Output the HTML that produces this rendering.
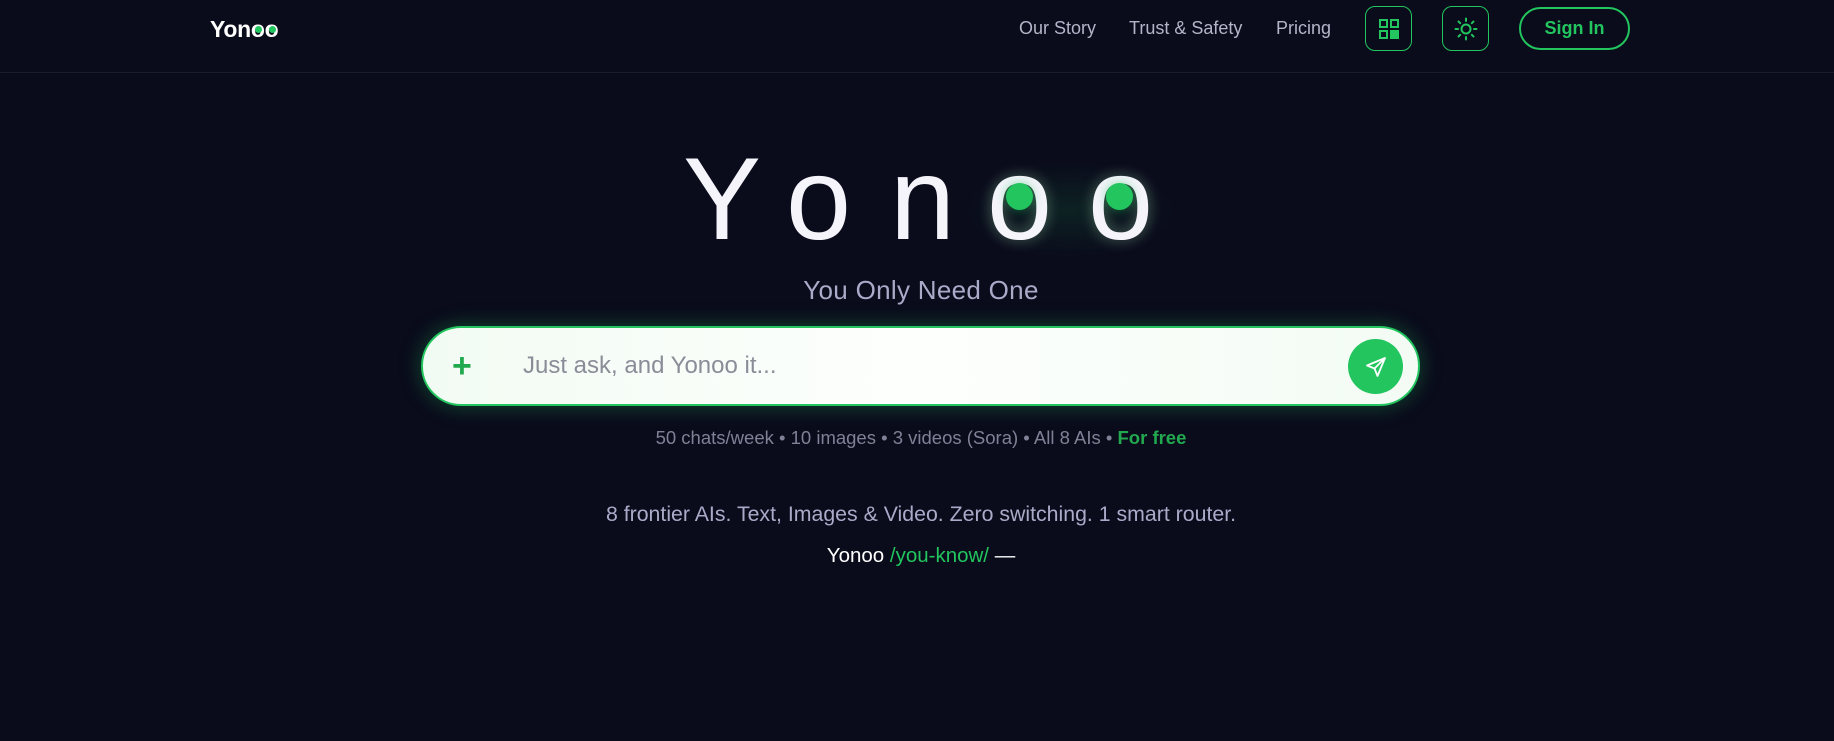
<!DOCTYPE html>
<html><head><meta charset="utf-8"><style>
*{margin:0;padding:0;box-sizing:border-box}
body{width:1834px;height:741px;background:#0a0b1b;font-family:"Liberation Sans",sans-serif;position:relative;overflow:hidden;color:#fff}
.hdr{position:absolute;left:0;top:0;width:1834px;height:73px;border-bottom:1px solid #1a1c2c}
.abs{position:absolute;white-space:nowrap}
.nav{font-size:18px;color:#b3b5c8;top:18px}
.ib{position:absolute;top:6px;width:47px;height:45px;border:1.5px solid #22c55e;border-radius:10px;display:flex;align-items:center;justify-content:center}
.big{position:absolute;top:129px;font-size:117px;color:#f4f4fa;line-height:140px}
.dot{position:absolute;width:27px;height:27px;border-radius:50%;background:#22c55e}
</style></head><body>
<div class="hdr"></div>
<div class="abs" style="left:210px;top:16px;font-size:23px;font-weight:bold;letter-spacing:-0.3px">Yon<span style="position:relative">o<span style="position:absolute;left:4px;top:10px;width:7px;height:7px;border-radius:50%;background:#22c55e"></span></span><span style="position:relative">o<span style="position:absolute;left:4px;top:10px;width:7px;height:7px;border-radius:50%;background:#22c55e"></span></span></div>
<div class="abs nav" style="left:1019px">Our Story</div>
<div class="abs nav" style="left:1129px">Trust &amp; Safety</div>
<div class="abs nav" style="left:1276px">Pricing</div>
<div class="ib" style="left:1365px"><svg width="22" height="22" viewBox="0 0 22 22" fill="none" stroke="#22c55e" stroke-width="2"><rect x="2" y="2" width="7" height="7"/><rect x="13" y="2" width="7" height="7"/><rect x="2" y="13" width="7" height="7"/><rect x="13" y="13" width="7" height="7" fill="#22c55e"/></svg></div>
<div class="ib" style="left:1442px"><svg width="24" height="24" viewBox="0 0 24 24" fill="none" stroke="#22c55e" stroke-width="2" stroke-linecap="round"><circle cx="12" cy="12" r="4.5"/><path d="M12 1.5v2.5M12 20v2.5M1.5 12H4M20 12h2.5M4.5 4.5l1.7 1.7M17.8 17.8l1.7 1.7M4.5 19.5l1.7-1.7M17.8 6.2l1.7-1.7"/></svg></div>
<div class="abs" style="left:1519px;top:7px;width:111px;height:43px;border:2px solid #22c55e;border-radius:22px;color:#22c55e;font-size:18px;font-weight:bold;text-align:center;line-height:39px">Sign In</div>

<div style="position:absolute;left:960px;top:160px;width:220px;height:100px;border-radius:50px;background:radial-gradient(ellipse at center,rgba(34,197,94,0.12),rgba(34,197,94,0) 70%)"></div>
<div class="big" style="left:683px">Y</div>
<div class="big" style="left:786px">o</div>
<div class="big" style="left:890px">n</div>
<div class="big" style="left:987px;text-shadow:0 0 14px rgba(200,255,210,.35)">o</div>
<div class="big" style="left:1088px;text-shadow:0 0 14px rgba(200,255,210,.35)">o</div>
<div class="dot" style="left:1006px;top:183px;box-shadow:0 0 10px rgba(34,197,94,.5)"></div>
<div class="dot" style="left:1106px;top:183px;box-shadow:0 0 10px rgba(34,197,94,.5)"></div>

<div class="abs" style="left:0;width:1842px;text-align:center;top:275px;font-size:26px;color:#a9abc9;letter-spacing:0.3px">You Only Need One</div>

<div style="position:absolute;left:421px;top:326px;width:999px;height:80px;border:2.5px solid #22c55e;border-radius:40px;background:linear-gradient(90deg,#f2fbf3,#fdfffd 50%,#f3fbf4);box-shadow:0 0 22px rgba(34,197,94,.35)"></div>
<div class="abs" style="left:452px;top:349px;font-size:34px;color:#22a94f;line-height:34px;font-weight:bold">+</div>
<div class="abs" style="left:523px;top:352px;font-size:24px;color:#8a8d98">Just ask, and Yonoo it...</div>
<div style="position:absolute;left:1348px;top:339px;width:55px;height:55px;border-radius:50%;background:#22c55e;display:flex;align-items:center;justify-content:center"><svg width="24" height="24" viewBox="0 0 24 24" fill="none" stroke="#fff" stroke-width="1.8" stroke-linejoin="round"><path d="M21 3L3 10.5l7.5 3L13.5 21z"/><path d="M21 3L10.5 13.5"/></svg></div>

<div class="abs" style="left:0;width:1842px;text-align:center;top:427px;font-size:18.5px;color:#7f8296">50 chats/week • 10 images • 3 videos (Sora) • All 8 AIs • <b style="color:#22a94f">For free</b></div>
<div class="abs" style="left:0;width:1842px;text-align:center;top:502px;font-size:21.3px;color:#a9abc9">8 frontier AIs. Text, Images &amp; Video. Zero switching. 1 smart router.</div>
<div class="abs" style="left:0;width:1842px;text-align:center;top:544px;font-size:20.5px;color:#fff">Yonoo <span style="color:#22c55e">/you-know/</span> —</div>
</body></html>
